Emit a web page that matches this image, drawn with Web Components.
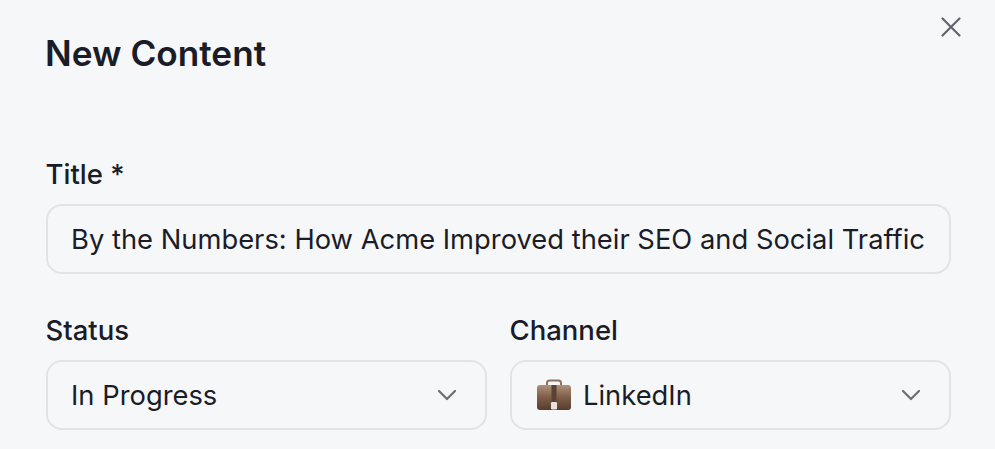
<!DOCTYPE html>
<html>
<head>
<meta charset="utf-8">
<style>
    html, body { margin: 0; height: 100%; background: #f6f7f9; overflow: hidden; }
    body { font-family: Inter, "Liberation Sans", sans-serif; color: #1a1c28; }
</style>
</head>
<body>
<content-modal heading="New Content">
    <form-field label="Title *" full><text-box>By the Numbers: How Acme Improved their SEO and Social Traffic</text-box></form-field>
    <form-field label="Status"><select-box>In Progress</select-box></form-field>
    <form-field label="Channel">
        <select-box>
            <svg slot="icon" width="36" height="32" viewBox="0 0 36 32">
                <defs>
                    <linearGradient id="bag" x1="0" y1="0" x2="0" y2="1">
                        <stop offset="0" stop-color="#ad927c"/>
                        <stop offset="0.5" stop-color="#7d5d48"/>
                        <stop offset="1" stop-color="#573c2d"/>
                    </linearGradient>
                </defs>
                <path d="M11 7V4C11 2.500 12 1.500 13.500 1.500h9C24 1.500 25 2.500 25 4V7" fill="none" stroke="#8f7360" stroke-width="2"/>
                <rect x="1" y="6" width="34" height="25" rx="3" fill="url(#bag)"/>
                <rect x="15.500" y="6" width="5" height="18" fill="#5c4232"/>
                <rect x="15" y="23" width="6" height="7.500" rx="1.200" fill="#e8e3de"/>
            </svg>
            LinkedIn
        </select-box>
    </form-field>
</content-modal>

<script>
const contentModalTemplate = document.createElement('template');
contentModalTemplate.innerHTML = `
    <style>
        :host {
            display: block;
            position: relative;
            box-sizing: border-box;
            height: 449px;
            padding: 33px 44px 0 46px;
        }
        h2 {
            margin: 0 0 85px -1px;
            font-size: 35.200px;
            line-height: 40px;
            font-weight: 600;
        }
        #fields {
            display: grid;
            grid-template-columns: 441px 441px;
            column-gap: 23px;
            row-gap: 40px;
        }
        #close {
            position: absolute;
            top: 17px;
            left: 941px;
            width: 20px;
            height: 20px;
            color: #62646c;
        }
    </style>
    <h2></h2>
    <svg id="close" viewBox="0 0 20 20" fill="none" stroke="currentColor" stroke-width="2.200" stroke-linecap="round">
        <path d="M1.500 1.500l17 17M18.500 1.500l-17 17"/>
    </svg>
    <div id="fields"><slot></slot></div>
`;

class ContentModal extends HTMLElement {
    constructor() {
        super();
        const shadowRoot = this.attachShadow({mode: 'open'});
        shadowRoot.appendChild(contentModalTemplate.content.cloneNode(true));
        shadowRoot.querySelector('h2').textContent = this.getAttribute('heading');
    }
}

const formFieldTemplate = document.createElement('template');
formFieldTemplate.innerHTML = `
    <style>
        :host {
            display: flex;
            flex-direction: column;
            gap: 14px;
        }
        :host([full]) {
            grid-column: 1 / -1;
        }
        label {
            margin-left: -0.500px;
            font-size: 27.500px;
            line-height: 32px;
            font-weight: 450;
        }
    </style>
    <label></label>
    <slot></slot>
`;

class FormField extends HTMLElement {
    constructor() {
        super();
        const shadowRoot = this.attachShadow({mode: 'open'});
        shadowRoot.appendChild(formFieldTemplate.content.cloneNode(true));
        shadowRoot.querySelector('label').textContent = this.getAttribute('label');
    }
}

const boxStyles = `
    :host {
        display: flex;
        align-items: center;
        box-sizing: border-box;
        height: 70px;
        padding: 0 28px 0 23px;
        border: 2px solid #e1e3e9;
        border-radius: 16px;
        font-size: 27.350px;
        white-space: nowrap;
        overflow: hidden;
    }
`;

const textBoxTemplate = document.createElement('template');
textBoxTemplate.innerHTML = `<style>${boxStyles}</style><slot></slot>`;

class TextBox extends HTMLElement {
    constructor() {
        super();
        const shadowRoot = this.attachShadow({mode: 'open'});
        shadowRoot.appendChild(textBoxTemplate.content.cloneNode(true));
    }
}

const selectBoxTemplate = document.createElement('template');
selectBoxTemplate.innerHTML = `
    <style>
        ${boxStyles}
        #value {
            flex: 1;
            display: flex;
            align-items: center;
            gap: 11px;
        }
        svg {
            width: 20px;
            height: 12px;
            color: #6b6d75;
            flex: none;
        }
        ::slotted(svg) {
            flex: none;
            margin-left: 1px;
        }
    </style>
    <div id="value"><slot name="icon"></slot><slot></slot></div>
    <svg viewBox="0 0 20 12" fill="none" stroke="currentColor" stroke-width="2.200" stroke-linecap="round" stroke-linejoin="round">
        <path d="M2 2l8 8 8-8"/>
    </svg>
`;

class SelectBox extends HTMLElement {
    constructor() {
        super();
        const shadowRoot = this.attachShadow({mode: 'open'});
        shadowRoot.appendChild(selectBoxTemplate.content.cloneNode(true));
    }
}

customElements.define('content-modal', ContentModal);
customElements.define('form-field', FormField);
customElements.define('text-box', TextBox);
customElements.define('select-box', SelectBox);
</script>
</body>
</html>
